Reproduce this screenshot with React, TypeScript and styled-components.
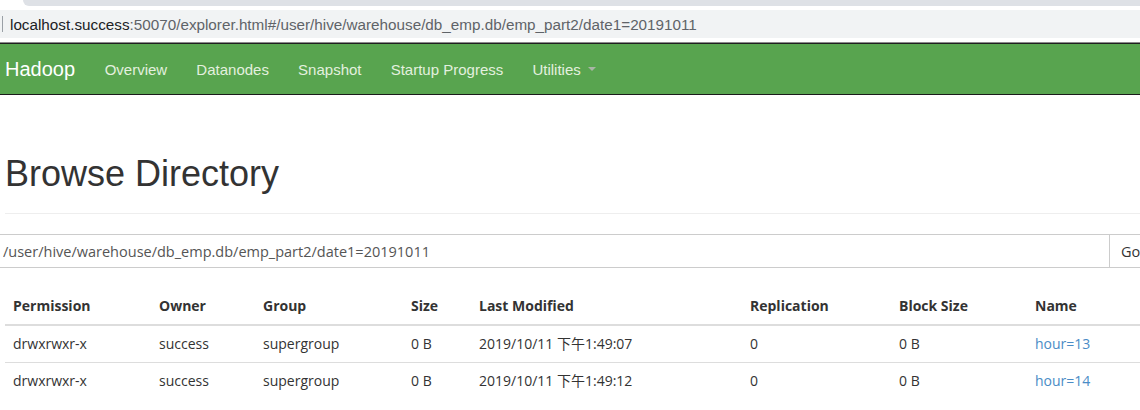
import React from "react";
import styled, { createGlobalStyle } from "styled-components";

const Global = createGlobalStyle`
  html, body { margin: 0; padding: 0; background: #fff; overflow: hidden; }
  body { width: 1140px; height: 410px; font-family: "Open Sans", "Noto Sans CJK SC", sans-serif; color: #333; }
`;

const Page = styled.div`
  width: 1180px;
`;

const TabStrip = styled.div`
  display: flex;
  height: 6px;
`;
const TabPiece = styled.div<{ $active?: boolean }>`
  width: ${(p) => (p.$active ? "23px" : "auto")};
  flex: ${(p) => (p.$active ? "none" : "1")};
  background: ${(p) => (p.$active ? "#ffffff" : "#dee1e6")};
  border-bottom-left-radius: ${(p) => (p.$active ? "0" : "8px")};
`;

const Toolbar = styled.div`
  background: #fff;
  padding: 4px 0;
  border-bottom: 1px solid #8a8a8a;
`;

const Omnibox = styled.div`
  height: 28px;
  background: #f1f3f4;
  display: flex;
  align-items: center;
  font-family: "Liberation Sans", Arial, sans-serif;
  font-size: 15.25px;
  color: #5f6368;
`;
const Caret = styled.span`
  width: 1px;
  height: 16px;
  background: #9aa0a6;
  margin: 0 7px 0 2px;
`;
const Host = styled.span`
  color: #202124;
`;

const Navbar = styled.nav`
  height: 50px;
  background: #58a44f;
  border-top: 1px solid #1f1f1f;
  border-bottom: 1px solid #1a1a1a;
  display: flex;
  align-items: center;
  font-family: "Liberation Sans", Arial, sans-serif;
`;
const Brand = styled.a`
  color: #fff;
  font-size: 20px;
  padding: 0 15px 0 5px;
  text-decoration: none;
`;
const NavLink = styled.a`
  color: #e3f0df;
  font-size: 15px;
  padding: 0 14.6px;
  text-decoration: none;
  display: flex;
  align-items: center;
`;
const DropCaret = styled.span`
  display: inline-block;
  margin-left: 7px;
  width: 0;
  height: 0;
  border-left: 4px solid transparent;
  border-right: 4px solid transparent;
  border-top: 4px solid #a9b5a6;
`;

const Content = styled.div`
  padding: 0 0 0 5px;
`;

const PageHeader = styled.div`
  margin-top: 59px;
  padding-bottom: 19px;
  border-bottom: 1px solid #eee;
`;
const Title = styled.h1`
  margin: 0;
  font-family: "Liberation Sans", Arial, sans-serif;
  font-weight: 400;
  font-size: 36px;
  line-height: 40px;
  color: #333;
`;

const SearchRow = styled.div`
  display: flex;
  margin: 20px 0 20px -5px;
  height: 34px;
`;
const PathInput = styled.input`
  width: 1110px;
  box-sizing: border-box;
  height: 34px;
  border: 1px solid #ccc;
  border-left: none;
  padding: 0 0 0 3px;
  font-family: "Open Sans", sans-serif;
  font-size: 14.5px;
  color: #555;
  outline: none;
`;
const GoButton = styled.button`
  height: 34px;
  border: 1px solid #ccc;
  margin-left: -1px;
  background: #fff;
  padding: 0 11px;
  font-family: "Open Sans", sans-serif;
  font-size: 14.5px;
  color: #333;
`;

const Table = styled.table`
  border-collapse: collapse;
  table-layout: fixed;
  width: 1170px;
  font-size: 14px;
`;
const Th = styled.th`
  text-align: left;
  font-weight: 700;
  padding: 8px;
  line-height: 20px;
  border-bottom: 2px solid #ddd;
`;
const Td = styled.td`
  padding: 8px;
  line-height: 20px;
  border-top: 1px solid #ddd;
`;
const Link = styled.a`
  color: #4a8cc6;
  text-decoration: none;
`;

const cols = [146, 104, 148, 68, 271, 149, 136, 148];
const headers = ["Permission", "Owner", "Group", "Size", "Last Modified", "Replication", "Block Size", "Name"];
const rows = [
  ["drwxrwxr-x", "success", "supergroup", "0 B", "2019/10/11 下午1:49:07", "0", "0 B", "hour=13"],
  ["drwxrwxr-x", "success", "supergroup", "0 B", "2019/10/11 下午1:49:12", "0", "0 B", "hour=14"],
];

export default function App() {
  return (
    <Page>
      <Global />
      <TabStrip>
        <TabPiece $active />
        <TabPiece />
      </TabStrip>
      <Toolbar>
        <Omnibox>
          <Caret />
          <Host>localhost.success</Host>
          :50070/explorer.html#/user/hive/warehouse/db_emp.db/emp_part2/date1=20191011
        </Omnibox>
      </Toolbar>
      <Navbar>
        <Brand href="#">Hadoop</Brand>
        <NavLink href="#">Overview</NavLink>
        <NavLink href="#">Datanodes</NavLink>
        <NavLink href="#">Snapshot</NavLink>
        <NavLink href="#">Startup Progress</NavLink>
        <NavLink href="#">
          Utilities
          <DropCaret />
        </NavLink>
      </Navbar>
      <Content>
        <PageHeader>
          <Title>Browse Directory</Title>
        </PageHeader>
        <SearchRow>
          <PathInput readOnly value="/user/hive/warehouse/db_emp.db/emp_part2/date1=20191011" />
          <GoButton>Go!</GoButton>
        </SearchRow>
        <Table>
          <colgroup>
            {cols.map((w, i) => (
              <col key={i} style={{ width: w }} />
            ))}
          </colgroup>
          <thead>
            <tr>
              {headers.map((h) => (
                <Th key={h}>{h}</Th>
              ))}
            </tr>
          </thead>
          <tbody>
            {rows.map((r, i) => (
              <tr key={i}>
                {r.map((c, j) => (
                  <Td key={j}>{j === 7 ? <Link href="#">{c}</Link> : c}</Td>
                ))}
              </tr>
            ))}
          </tbody>
        </Table>
      </Content>
    </Page>
  );
}
